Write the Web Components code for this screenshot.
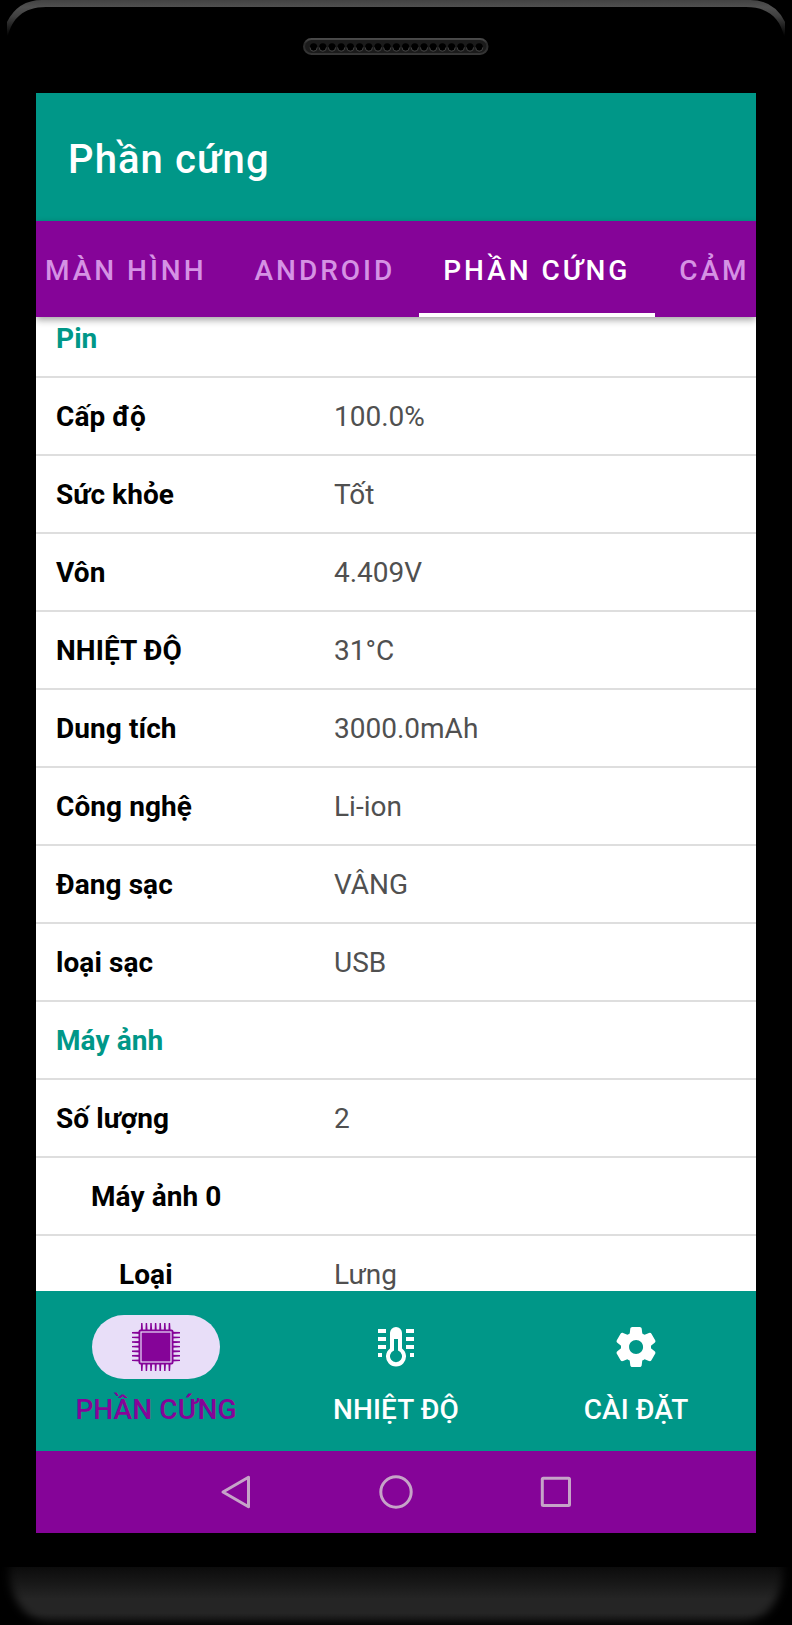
<!DOCTYPE html>
<html lang="vi">
<head>
<meta charset="utf-8">
<title>Phần cứng</title>
<style>
    body {
        margin: 0;
        background: #000;
        font-family: Roboto, "Noto Sans", sans-serif;
        --teal: #009788;
        --purple: #850498;
    }
</style>
</head>
<body>
<phone-frame>
    <app-bar>Phần cứng</app-bar>
    <tab-bar>
        <tab-item>MÀN HÌNH</tab-item>
        <tab-item>ANDROID</tab-item>
        <tab-item active>PHẦN CỨNG</tab-item>
        <tab-item>CẢM</tab-item>
    </tab-bar>
    <info-list>
        <info-row heading label="Pin"></info-row>
        <info-row label="Cấp độ">100.0%</info-row>
        <info-row label="Sức khỏe">Tốt</info-row>
        <info-row label="Vôn">4.409V</info-row>
        <info-row label="NHIỆT ĐỘ">31°C</info-row>
        <info-row label="Dung tích">3000.0mAh</info-row>
        <info-row label="Công nghệ">Li-ion</info-row>
        <info-row label="Đang sạc">VÂNG</info-row>
        <info-row label="loại sạc">USB</info-row>
        <info-row heading label="Máy ảnh"></info-row>
        <info-row label="Số lượng">2</info-row>
        <info-row level="1" label="Máy ảnh 0"></info-row>
        <info-row level="2" label="Loại">Lưng</info-row>
    </info-list>
    <bottom-nav>
        <nav-item active icon="chip">PHẦN CỨNG</nav-item>
        <nav-item icon="thermometer">NHIỆT ĐỘ</nav-item>
        <nav-item icon="gear">CÀI ĐẶT</nav-item>
    </bottom-nav>
    <system-bar></system-bar>
</phone-frame>

<script>
const createElement = (name, html, setup) => {
    const template = document.createElement('template')
    template.innerHTML = html
    customElements.define(name, class extends HTMLElement {
        constructor () {
            super()
            this.attachShadow({ mode: 'open' })
            this.shadowRoot.appendChild(template.content.cloneNode(true))
        }

        connectedCallback () {
            if (setup) setup(this, this.shadowRoot)
        }
    })
}

createElement('phone-speaker', `
    <style>
        :host { display: block; width: 186px; height: 17px; }
        svg { display: block; }
    </style>
    <svg width="186" height="17" viewBox="0 0 186 17">
        <defs>
            <linearGradient id="rim" x1="0" y1="0" x2="0" y2="1">
                <stop offset="0" stop-color="#4a4a4a"/>
                <stop offset=".3" stop-color="#292929"/>
                <stop offset="1" stop-color="#363636"/>
            </linearGradient>
        </defs>
        <rect x="1" y="1" width="183.500" height="15" rx="7.5" fill="#1b1b1b" stroke="url(#rim)" stroke-width="2"/>
        <g class="holes"></g>
    </svg>
`, (host, root) => {
    let holes = ''
    for (let i = 0; i < 19; i += 1) {
        const x = 10.6 + i * 9.2
        holes += `<circle cx="${x}" cy="8.8" r="3.6" fill="#000"/>
            <path d="M${x - 3.6} 9.4a3.6 3.9 0 0 0 7.2 0" fill="none" stroke="#414141" stroke-width="1"/>`
    }
    root.querySelector('.holes').innerHTML = holes
})

createElement('phone-frame', `
    <style>
        :host {
            display: grid;
            grid-template-rows: 93px 1440px 34px 58px;
            width: 792px;
            height: 1625px;
            overflow: hidden;
            background: #000;
        }
        .top {
            display: grid;
            grid-template: 100% / 100%;
            justify-items: center;
        }
        .top > * { grid-area: 1 / 1; }
        .edge { display: block; }
        phone-speaker { margin-top: 38px; }
        .screen {
            display: grid;
            grid-template-columns: 100%;
            grid-template-rows: 128px 96px 974px 160px 82px;
            width: 720px;
            margin: 0 auto;
            overflow: hidden;
            background: #fff;
        }
        .chin {
            grid-row: 4;
            margin: 0;
            overflow: hidden;
        }
        .chin svg { display: block; }
    </style>
    <div class="top">
        <svg class="edge" width="792" height="93">
            <defs>
                <linearGradient id="fade" x1="0" y1="0" x2="0" y2="36" gradientUnits="userSpaceOnUse">
                    <stop offset="0" stop-color="#424242"/>
                    <stop offset=".2" stop-color="#505050"/>
                    <stop offset=".45" stop-color="#404040"/>
                    <stop offset="1" stop-color="#000"/>
                </linearGradient>
            </defs>
            <path fill="url(#fade)" d="M7 36V22Q18 0 42 0H750Q774 0 785 22V36H784C780 19 769 7 746 7H46C23 7 12 19 8 36z"/>
        </svg>
        <phone-speaker></phone-speaker>
    </div>
    <div class="screen"><slot></slot></div>
    <div class="chin">
        <svg width="792" height="58">
            <defs>
                <linearGradient id="chin" x1="0" y1="0" x2="0" y2="1">
                    <stop offset="0" stop-color="#0c0c0c"/>
                    <stop offset=".3" stop-color="#191919"/>
                    <stop offset=".55" stop-color="#252525"/>
                    <stop offset=".8" stop-color="#252525"/>
                    <stop offset="1" stop-color="#101010"/>
                </linearGradient>
                <filter id="soft" x="-5%" y="-30%" width="110%" height="160%"><feGaussianBlur stdDeviation="4"/></filter>
                <mask id="corner">
                    <path filter="url(#soft)" fill="#fff" d="M9-20H783V8C780 36 764 56 740 56H52C28 56 12 36 9 8z"/>
                </mask>
            </defs>
            <rect width="792" height="58" fill="url(#chin)" mask="url(#corner)"/>
        </svg>
    </div>
`)

createElement('app-bar', `
    <style>
        :host {
            display: flex;
            align-items: center;
            padding: 4px 32px 0;
            background: var(--teal);
            color: #fff;
            font-size: 40px;
            font-weight: 500;
            letter-spacing: 1.1px;
        }
    </style>
    <slot></slot>
`)

createElement('tab-bar', `
    <style>
        :host {
            display: flex;
            position: relative;
            z-index: 1;
            overflow: visible;
            background: var(--purple);
            box-shadow: 0 3px 7px rgba(0, 0, 0, .36);
        }
        /* scrolled so that the first tab is partly off screen */
        .tabs { display: flex; margin-left: -15px; }
    </style>
    <div class="tabs"><slot></slot></div>
`)

createElement('tab-item', `
    <style>
        :host {
            display: flex;
            align-items: center;
            box-sizing: border-box;
            height: 96px;
            padding: 6px 24px 0;
            border-bottom: 4px solid transparent;
            color: #d592e4;
            font-size: 28px;
            font-weight: 500;
            letter-spacing: 2.98px;
            white-space: nowrap;
        }
        :host([active]) { min-width: 236px; color: #fff; border-color: #fff; }
    </style>
    <slot></slot>
`)

createElement('info-list', `
    <style>
        :host { display: block; overflow: hidden; }
        .rows { margin-top: -17px; }
    </style>
    <div class="rows"><slot></slot></div>
`)

createElement('info-row', `
    <style>
        :host {
            display: grid;
            grid-template-columns: 298px 1fr;
            align-items: center;
            height: 76px;
            border-bottom: 2px solid #dedede;
            color: #505050;
            font-size: 28px;
        }
        .label {
            padding-left: 20px;
            color: #000;
            font-weight: 700;
            letter-spacing: .08px;
            white-space: nowrap;
        }
        :host([heading]) .label { color: var(--teal); }
        :host([level="1"]) .label { padding-left: 55px; }
        :host([level="2"]) .label { padding-left: 83px; }
    </style>
    <div class="label"></div>
    <div><slot></slot></div>
`, (host, root) => {
    root.querySelector('.label').textContent = host.getAttribute('label')
})

createElement('bottom-nav', `
    <style>
        :host {
            display: grid;
            grid-template-columns: repeat(3, 1fr);
            background: var(--teal);
            z-index: 1;
        }
    </style>
    <slot></slot>
`)

let pins = ''
for (let i = 0; i < 7; i += 1) {
    const p = 9.8 + i * 4.6
    pins += `M${p - 1} 8L${p - .7} 0h1.4L${p + 1.2} 8zM${p - 1} 40L${p - .7} 48h1.4L${p + 1.2} 40z`
    pins += `M8 ${p - 1}L0 ${p - .7}v1.4L8 ${p + 1.2}zM40 ${p - 1}L48 ${p - .7}v1.4L40 ${p + 1.2}z`
}

const icons = {
    chip: `<path d="${pins}"/><rect x="6.5" y="6.5" width="35" height="35" rx="2"/>
        <rect x="9" y="9" width="30" height="30" fill="none" stroke="#e8def8" stroke-width="1.2"/>`,
    thermometer: `<path fill-rule="evenodd" d="M18 10a6 6 0 0 1 12 0v15.500a10 10 0 1 1-12 0zM22 16v11.500a6 6 0 1 0 4 0V16z"/>
        <path d="M6 6h8v4H6zm0 8h8v4H6zm0 8h8v4H6zm0 8h4v4H6zM34 6h8v4h-8zm0 8h8v4h-8zm0 8h8v4h-8zm4 8h4v4h-4z"/>`,
    gear: `<path transform="scale(2)" d="M19.500 12c0-.23-.01-.45-.03-.68l1.860-1.410c.4-.3.510-.86.260-1.300l-1.870-3.230a.987.987 0 0 0-1.250-.42l-2.150.91c-.37-.26-.76-.49-1.170-.68l-.29-2.310c-.06-.5-.49-.88-.99-.88h-3.730c-.51 0-.94.380-1 .88l-.29 2.310c-.41.190-.8.420-1.170.68l-2.150-.91c-.46-.2-1-.02-1.250.42L2.410 8.620c-.25.440-.14.990.26 1.300l1.860 1.410a7.343 7.343 0 0 0 0 1.350l-1.860 1.410c-.4.300-.51.860-.26 1.300l1.870 3.230c.25.440.79.620 1.250.42l2.150-.91c.37.260.76.490 1.170.68l.29 2.310c.06.500.49.880.99.880h3.730c.5 0 .93-.38.990-.88l.29-2.310c.41-.19.800-.42 1.170-.68l2.150.91c.46.200 1 .02 1.250-.42l1.870-3.230c.25-.44.140-.99-.26-1.300l-1.860-1.410c.03-.23.040-.45.040-.68zm-7.460 3.500c-1.930 0-3.500-1.570-3.500-3.500s1.570-3.500 3.500-3.500 3.500 1.570 3.500 3.500-1.570 3.500-3.500 3.500z"/>`
}

createElement('nav-item', `
    <style>
        :host {
            display: flex;
            flex-direction: column;
            align-items: center;
            gap: 14px;
            padding-top: 24px;
            color: #fff;
            font-size: 28px;
            font-weight: 500;
            line-height: 33px;
            letter-spacing: .1px;
            white-space: nowrap;
        }
        :host([active]) { color: var(--purple); }
        .icon {
            display: grid;
            place-items: center;
            width: 128px;
            height: 64px;
            border-radius: 32px;
        }
        :host([active]) .icon { background: #e8def8; }
        svg { fill: currentColor; }
    </style>
    <div class="icon"><svg width="48" height="48" viewBox="0 0 48 48"></svg></div>
    <div><slot></slot></div>
`, (host, root) => {
    root.querySelector('svg').innerHTML = icons[host.getAttribute('icon')]
})

createElement('system-bar', `
    <style>
        :host {
            display: flex;
            justify-content: center;
            align-items: center;
            gap: 120px;
            background: var(--purple);
        }
        svg { fill: none; stroke: #c6a3c8; stroke-width: 3; stroke-linejoin: round; }
    </style>
    <svg width="40" height="40"><path d="M32.500 5.200V34.800L7 20z"/></svg>
    <svg width="40" height="40"><circle cx="20" cy="20" r="15.200"/></svg>
    <svg width="40" height="40"><rect x="6.300" y="6.300" width="27.200" height="27.200" rx="1"/></svg>
`)
</script>
</body>
</html>
